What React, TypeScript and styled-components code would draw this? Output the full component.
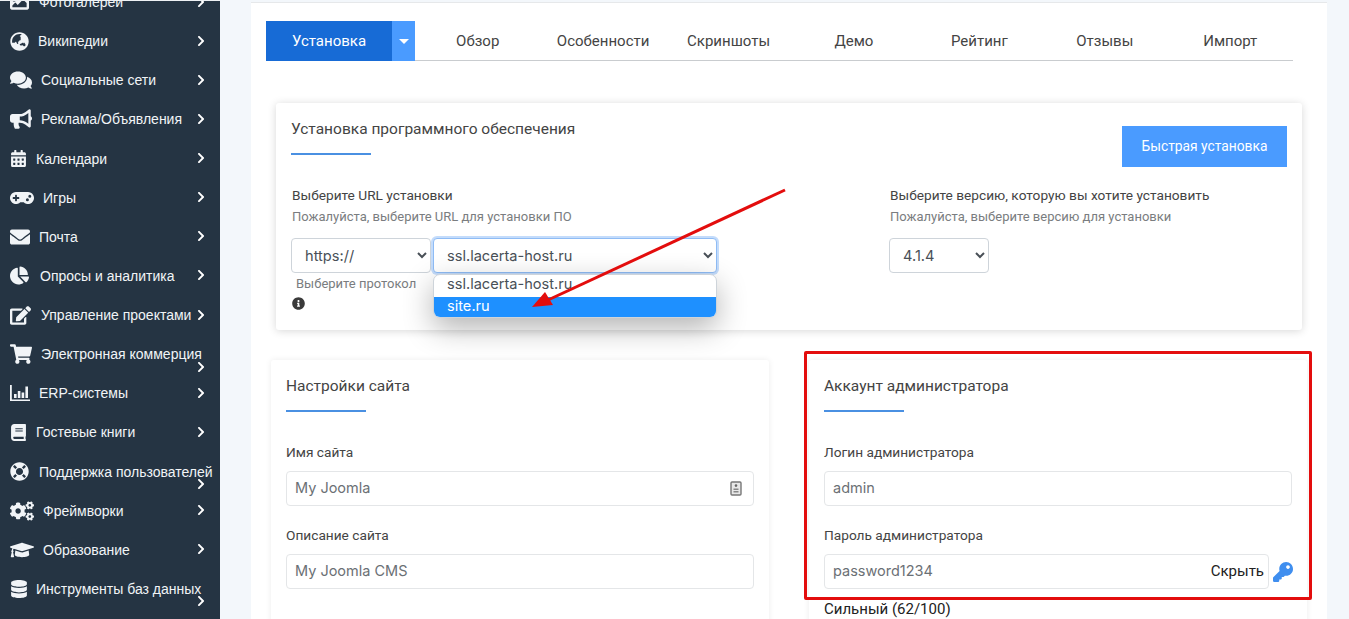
import React from "react"
import styled, { createGlobalStyle } from "styled-components"
import {
  FaBook,
  FaBullhorn,
  FaCalendarAlt,
  FaChartPie,
  FaChevronRight,
  FaCogs,
  FaComments,
  FaDatabase,
  FaEdit,
  FaEnvelope,
  FaGamepad,
  FaGlobeAsia,
  FaGraduationCap,
  FaImage,
  FaInfoCircle,
  FaKey,
  FaLifeRing,
  FaShoppingCart,
} from "react-icons/fa"
import { IconType } from "react-icons"

const ErpIcon = ({ size }: { size?: number }): JSX.Element => (
  <svg width={size} height={size} viewBox="0 0 20 20" fill="currentColor">
    <path d="M0 2h1.8v14.4H20V18H0z" />
    <path d="M4 11h2.6v4H4zM7.8 8h2.6v7H7.8zM11.6 9.5h2.6V15h-2.6zM15.4 3.5H18V15h-2.6z" />
  </svg>
)

interface MenuEntry {
  label: string
  icon: IconType | typeof ErpIcon
  gap: number
  size?: number
  wrapped?: boolean
}

const menu: MenuEntry[] = [
  { label: "Фотогалереи", icon: FaImage, gap: 10 },
  { label: "Википедии", icon: FaGlobeAsia, gap: 9 },
  { label: "Социальные сети", icon: FaComments, gap: 9, size: 22 },
  { label: "Реклама/Объявления", icon: FaBullhorn, gap: 9, size: 22 },
  { label: "Календари", icon: FaCalendarAlt, gap: 9, size: 17 },
  { label: "Игры", icon: FaGamepad, gap: 9, size: 24 },
  { label: "Почта", icon: FaEnvelope, gap: 9, size: 20 },
  { label: "Опросы и аналитика", icon: FaChartPie, gap: 11 },
  { label: "Управление проектами", icon: FaEdit, gap: 10, size: 21 },
  { label: "Электронная коммерция", icon: FaShoppingCart, gap: 9, size: 22, wrapped: true },
  { label: "ERP-системы", icon: ErpIcon, gap: 9, size: 20 },
  { label: "Гостевые книги", icon: FaBook, gap: 9, size: 17 },
  { label: "Поддержка пользователей", icon: FaLifeRing, gap: 10, wrapped: true },
  { label: "Фреймворки", icon: FaCogs, gap: 9, size: 24 },
  { label: "Образование", icon: FaGraduationCap, gap: 9, size: 24 },
  { label: "Инструменты баз данных", icon: FaDatabase, gap: 8, size: 18, wrapped: true },
]

const tabs = ["Обзор", "Особенности", "Скриншоты", "Демо", "Рейтинг", "Отзывы", "Импорт"]

const GlobalStyle = createGlobalStyle`
  html, body {
    margin: 0;
    height: 619px;
    overflow: hidden;
  }
  * {
    box-sizing: border-box;
  }
  body {
    font-family: "Roboto", "Liberation Sans", sans-serif;
    color: #333;
  }
`

const Page = styled.div`
  position: relative;
  display: flex;
  height: 619px;
  overflow: hidden;
  background: #f3f7fb;
`

const Sidebar = styled.nav`
  flex: 0 0 220px;
  height: 619px;
  overflow: hidden;
  background: #253443;
  border-top: 1px solid #eef1f4;
`

const MenuList = styled.ul`
  list-style: none;
  margin: -18.5px 0 0;
  padding: 0;
`

const MenuItem = styled.li`
  position: relative;
  display: flex;
  align-items: center;
  height: 39.13px;
  padding-left: 10px;
  color: #f1f4f7;
  font: 14px "Liberation Sans", Arial, sans-serif;
  white-space: nowrap;
`

const MenuLabel = styled.span<{ $gap: number }>`
  margin-left: ${({ $gap }) => $gap}px;
`

const MenuChevron = styled(FaChevronRight)<{ $wrapped: boolean }>`
  position: absolute;
  left: 195px;
  top: ${({ $wrapped }) => ($wrapped ? 26 : 13)}px;
  font-size: 12px;
  color: #fff;
`

const Content = styled.main`
  flex: 1;
  padding: 2px 22px 0 31px;
`

const Panel = styled.div`
  height: 640px;
  padding: 18px 34px 0 15px;
  background: #fff;
  border-top: 1px solid #e6e8ea;
`

const TabBar = styled.div`
  display: flex;
  height: 40px;
  border-bottom: 1px solid #c9cccf;
`

const ActiveTab = styled.div`
  display: flex;
  align-items: center;
  justify-content: center;
  width: 126px;
  height: 40px;
  background: #176bd6;
  color: #fff;
  font-size: 15px;
`

const TabCaret = styled.div`
  display: flex;
  align-items: center;
  justify-content: center;
  width: 23px;
  height: 40px;
  background: #4a9bff;

  &::after {
    content: "";
    border-left: 5px solid transparent;
    border-right: 5px solid transparent;
    border-top: 5px solid #fff;
  }
`

const Tab = styled.div`
  display: flex;
  flex: 1;
  align-items: center;
  justify-content: center;
  height: 40px;
  color: #444;
  font-size: 15px;
`

const InstallCard = styled.section`
  display: flex;
  justify-content: space-between;
  height: 227px;
  margin: 42px -9px 0 10px;
  padding: 16px 15px 0;
  background: #fff;
  border-radius: 3px;
  box-shadow: 0 1px 8px rgba(0, 0, 0, 0.16);
`

const InstallMain = styled.div`
  width: 598px;
`

const InstallSide = styled.div`
  display: flex;
  flex-direction: column;
  align-items: flex-end;
  width: 398px;
`

const QuickButton = styled.button`
  width: 165px;
  height: 41px;
  margin: 7px 0 0;
  padding: 0 0 2px;
  border: 0;
  background: #4a9bff;
  color: #fff;
  font: 13.8px "Roboto", sans-serif;
`

const VersionBlock = styled.div`
  width: 398px;
  margin-top: 19px;
`

const CardTitle = styled.h3`
  margin: 0;
  height: 36px;
  border: 0;
  color: #444;
  font-size: 15.5px;
  font-weight: 400;
  line-height: 21px;

  &::after {
    content: "";
    display: block;
    width: 80px;
    height: 2px;
    margin-top: 13px;
    background: #4a90e2;
  }
`

const FieldTitle = styled.div`
  height: 19px;
  margin-top: 31px;
  padding-left: 1px;
  color: #444;
  font-size: 13.7px;
  line-height: 18px;
`

const FieldHint = styled.div`
  height: 16px;
  margin-top: 4px;
  padding-left: 1px;
  color: #7a7d80;
  font-size: 13px;
  line-height: 16px;
`

const VersionTitle = styled(FieldTitle)`
  margin-top: 0;
`

const SelectRow = styled.div`
  position: relative;
  display: flex;
  gap: 2px;
  margin-top: 13px;
`

const NativeSelect = styled.select<{ $width: number; $focused?: boolean }>`
  width: ${({ $width }) => $width}px;
  height: 35px;
  padding: 0 9px;
  background: #fff;
  border: 1px solid ${({ $focused }) => ($focused ? "#8fbcf5" : "#ced4da")};
  border-radius: 4px;
  box-shadow: ${({ $focused }) => ($focused ? "0 0 0 2px #c4dcfb" : "none")};
  color: #495057;
  font: 14.6px "Inter", sans-serif;
`

const OptionList = styled.div`
  position: absolute;
  top: 36px;
  left: 142px;
  width: 284px;
  height: 44px;
  overflow: hidden;
  background: #fff;
  border: 1px solid #ced4da;
  border-radius: 7px;
  box-shadow: 0 10px 30px rgba(0, 0, 0, 0.3);
  z-index: 2;
`

const Option = styled.div<{ $selected?: boolean }>`
  height: 22px;
  padding-left: 13px;
  background: ${({ $selected }) => ($selected ? "#1e90ff" : "transparent")};
  color: ${({ $selected }) => ($selected ? "#fff" : "#495057")};
  font: 14.6px/19px "Inter", sans-serif;
`

const ProtocolHint = styled.div`
  margin: 3px 0 0 5px;
  color: #7a7d80;
  font-size: 13px;
  line-height: 16px;
`

const InfoIcon = styled(FaInfoCircle)`
  display: block;
  margin: 5px 0 0 1px;
  font-size: 13px;
  color: #3a3a3a;
`

const CardRow = styled.div`
  display: grid;
  grid-template-columns: 498px 498px;
  gap: 40px;
  margin: 30px -14px 0 5px;
`

const Card = styled.section`
  height: 300px;
  padding: 16px 15px 0;
  background: #fff;
  border-radius: 3px;
  box-shadow: 0 0 6px rgba(0, 0, 0, 0.08);
`

const Label = styled.div<{ $first?: boolean }>`
  height: 19px;
  margin-top: ${({ $first }) => ($first ? 31 : 20)}px;
  margin-bottom: 9px;
  color: #444;
  font-size: 13.7px;
  line-height: 18px;
`

const InputWrap = styled.div`
  position: relative;
  display: flex;
  align-items: center;
  gap: 4px;
`

const TextInput = styled.input`
  flex: 1;
  min-width: 0;
  height: 35px;
  padding: 0 8px 2px;
  background: #fff;
  border: 1px solid #e4e6e8;
  border-radius: 4px;
  color: #6b7075;
  font: 14.5px "Inter", sans-serif;
`

const InputBadge = styled.svg`
  position: absolute;
  right: 12px;
  top: 10px;
`

const RevealText = styled.span`
  position: absolute;
  right: 28px;
  top: 8px;
  color: #222;
  font-size: 15px;
  line-height: 19px;
`

const KeyIcon = styled(FaKey)`
  flex: 0 0 20px;
  margin-right: -1px;
  font-size: 20px;
  color: #3f8eef;
`

const Strength = styled.div`
  margin-top: 10px;
  color: #222;
  font-size: 15px;
  line-height: 20px;
`

const AdminFrame = styled.div`
  position: absolute;
  left: 804px;
  top: 351px;
  width: 508px;
  height: 249px;
  border: 3px solid #e30d0d;
  border-radius: 2px;
  pointer-events: none;
`

const ArrowLayer = styled.svg`
  position: absolute;
  left: 520px;
  top: 180px;
  z-index: 3;
  pointer-events: none;
`

const App = (): JSX.Element => (
  <Page>
    <GlobalStyle />
    <Sidebar>
      <MenuList>
        {menu.map(
          ({ label, icon: Icon, gap, size, wrapped }): JSX.Element => (
            <MenuItem key={label}>
              <Icon size={size || 19} />
              <MenuLabel $gap={gap}>{label}</MenuLabel>
              <MenuChevron $wrapped={!!wrapped} />
            </MenuItem>
          )
        )}
      </MenuList>
    </Sidebar>
    <Content>
      <Panel>
        <TabBar>
          <ActiveTab>Установка</ActiveTab>
          <TabCaret />
          {tabs.map(
            (tab): JSX.Element => (
              <Tab key={tab}>{tab}</Tab>
            )
          )}
        </TabBar>
        <InstallCard>
          <InstallMain>
            <CardTitle>Установка программного обеспечения</CardTitle>
            <FieldTitle>Выберите URL установки</FieldTitle>
            <FieldHint>Пожалуйста, выберите URL для установки ПО</FieldHint>
            <SelectRow>
              <NativeSelect $width={140} defaultValue="https">
                <option value="https">https://</option>
              </NativeSelect>
              <NativeSelect $width={284} $focused>
                <option>ssl.lacerta-host.ru</option>
                <option>site.ru</option>
              </NativeSelect>
              <OptionList>
                <Option>ssl.lacerta-host.ru</Option>
                <Option $selected>site.ru</Option>
              </OptionList>
            </SelectRow>
            <ProtocolHint>Выберите протокол</ProtocolHint>
            <InfoIcon />
          </InstallMain>
          <InstallSide>
            <QuickButton>Быстрая установка</QuickButton>
            <VersionBlock>
              <VersionTitle>Выберите версию, которую вы хотите установить</VersionTitle>
              <FieldHint>Пожалуйста, выберите версию для установки</FieldHint>
              <SelectRow>
                <NativeSelect $width={100}>
                  <option>4.1.4</option>
                </NativeSelect>
              </SelectRow>
            </VersionBlock>
          </InstallSide>
        </InstallCard>
        <CardRow>
          <Card>
            <CardTitle>Настройки сайта</CardTitle>
            <Label $first>Имя сайта</Label>
            <InputWrap>
              <TextInput defaultValue="My Joomla" />
              <InputBadge width="12" height="15" viewBox="0 0 12 15">
                <rect x="1" y="1" width="10" height="13" rx="1" fill="#e8e8e8" stroke="#777" strokeWidth="1.4" />
                <circle cx="6" cy="4.6" r="1.3" fill="#666" />
                <path d="M3.5 8.2h5M3.5 10.8h5" stroke="#888" strokeWidth="1.4" />
              </InputBadge>
            </InputWrap>
            <Label>Описание сайта</Label>
            <InputWrap>
              <TextInput defaultValue="My Joomla CMS" />
            </InputWrap>
          </Card>
          <Card>
            <CardTitle>Аккаунт администратора</CardTitle>
            <Label $first>Логин администратора</Label>
            <InputWrap>
              <TextInput defaultValue="admin" />
            </InputWrap>
            <Label>Пароль администратора</Label>
            <InputWrap>
              <TextInput defaultValue="password1234" />
              <RevealText>Скрыть</RevealText>
              <KeyIcon />
            </InputWrap>
            <Strength>Сильный (62/100)</Strength>
          </Card>
        </CardRow>
      </Panel>
    </Content>
    <AdminFrame />
    <ArrowLayer width="280" height="140" viewBox="0 0 280 140">
      <path d="M265 10 L28 120" stroke="#e30d0d" strokeWidth="3" fill="none" />
      <path d="M12 127 L25 112 L33 125 Z" fill="#e30d0d" />
    </ArrowLayer>
  </Page>
)

export default App
